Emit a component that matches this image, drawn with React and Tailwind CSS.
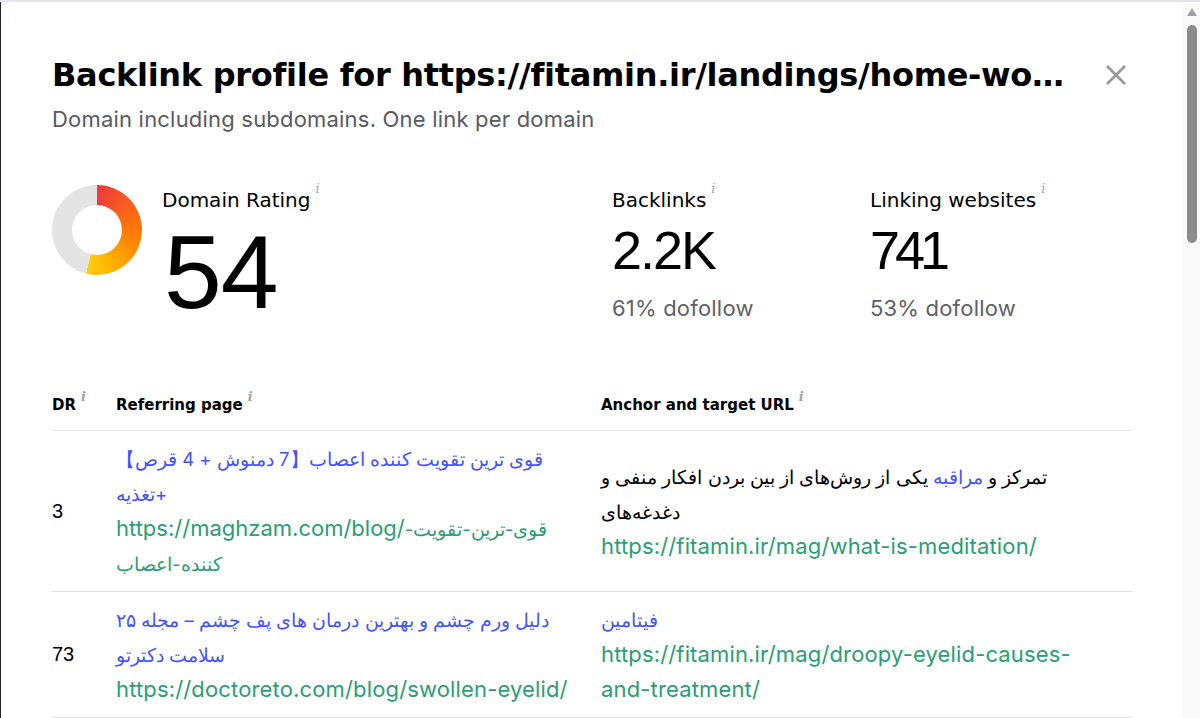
import React from "react";

const I = () => (
  <span className="ml-[5px] relative -top-[4px] text-[13px] italic text-[#a3a3a3] font-['DejaVu_Serif',serif] leading-none">i</span>
);

const FA = ({ children }) => <span className="text-[18.5px] leading-[20px]">{children}</span>;

export default function App() {
  return (
    <div className="w-[1200px] h-[718px] overflow-hidden bg-white flex flex-col font-['Inter',sans-serif]">
      <div className="h-[2px] bg-[#e8e4ee] shrink-0" />
      <div className="flex flex-1 min-h-0">
        <div className="w-[1px] bg-[#1f2535] shrink-0" />
        <div className="flex-1 min-w-0 px-[51px] pt-[53px]">
          {/* Title */}
          <div className="flex items-center">
            <h1 className="flex-1 min-w-0 truncate text-[32px] leading-[40px] font-bold text-black font-['DejaVu_Sans',sans-serif] tracking-[-0.3px]">
              Backlink profile for https://fitamin.ir/landings/home-workout-plans/
            </h1>
            <button className="ml-[30px] mr-[4px] w-[24px] h-[24px] flex items-center justify-center text-[#9a9a9a]">
              <svg width="24" height="24" viewBox="0 0 24 24" fill="none" stroke="currentColor" strokeWidth="2.8" strokeLinecap="butt">
                <path d="M3 3L21 21M21 3L3 21" />
              </svg>
            </button>
          </div>
          <p className="mt-[10px] text-[22px] leading-[28px] text-[#5a5a63] tracking-[0.2px]">
            Domain including subdomains. One link per domain
          </p>

          {/* Stats */}
          <div className="mt-[52px] flex">
            <div className="w-[560px] flex">
              <div className="w-[90px] h-[90px] rounded-full bg-[conic-gradient(#ee3a3a_0deg,#fa5a20_45deg,#ff7f00_100deg,#ffb400_160deg,#ffcc10_194deg,#e4e4e4_194deg,#e4e4e4_360deg)] flex items-center justify-center shrink-0">
                <div className="w-[50px] h-[50px] rounded-full bg-white" />
              </div>
              <div className="ml-[20px] mt-[1px]">
                <div className="text-[20px] leading-[28px] text-black flex items-start font-['DejaVu_Sans',sans-serif]">Domain Rating<I /></div>
                <div className="mt-[6px] ml-[2px] text-[104px] leading-none text-black font-['Liberation_Sans',sans-serif] tracking-[-1px]">54</div>
              </div>
            </div>
            <div className="w-[258px] mt-[1px]">
              <div className="text-[20px] leading-[28px] text-black flex items-start font-['DejaVu_Sans',sans-serif]">Backlinks<I /></div>
              <div className="mt-[9px] text-[54px] leading-none text-black font-['Liberation_Sans',sans-serif] tracking-[-2px]">2.2K</div>
              <div className="mt-[17px] text-[22px] leading-[28px] text-[#5f5f69] tracking-[0.2px]">61% dofollow</div>
            </div>
            <div className="mt-[1px]">
              <div className="text-[20px] leading-[28px] text-black flex items-start font-['DejaVu_Sans',sans-serif]">Linking websites<I /></div>
              <div className="mt-[9px] text-[54px] leading-none text-black font-['Liberation_Sans',sans-serif] tracking-[-5px]">741</div>
              <div className="mt-[17px] text-[22px] leading-[28px] text-[#5f5f69] tracking-[0.2px]">53% dofollow</div>
            </div>
          </div>

          {/* Table */}
          <div className="mt-[57px]">
            <div className="flex h-[50px] items-center border-b border-[#e3e3e3] text-[15px] font-bold text-black font-['DejaVu_Sans',sans-serif]">
              <div className="w-[64px] flex items-start">DR<I /></div>
              <div className="w-[485px] flex items-start">Referring page<I /></div>
              <div className="flex-1 flex items-start">Anchor and target URL<I /></div>
            </div>

            <div className="flex border-b border-[#e3e3e3] py-[10px] text-[22px] leading-[35px]">
              <div className="w-[64px] flex items-center text-black text-[20px] font-['Liberation_Sans',sans-serif]">3</div>
              <div className="w-[485px] pr-[24px]">
                <div className="text-[#4353ff]"><FA>قوی ترین تقویت کننده اعصاب【7 دمنوش + 4 قرص】+تغذیه</FA></div>
                <div className="text-[#2a9e76]">https://maghzam.com/blog/<FA>قوی-ترین-تقویت-کننده-اعصاب</FA></div>
              </div>
              <div className="flex-1 pr-[24px] flex flex-col justify-center">
                <div className="text-black">
                  <FA>تمرکز و <span className="text-[#4353ff]">مراقبه</span> یکی از روش‌های از بین بردن افکار منفی و دغدغه‌های</FA>
                </div>
                <div className="text-[#2a9e76] tracking-[0.15px]">https://fitamin.ir/mag/what-is-meditation/</div>
              </div>
            </div>

            <div className="flex border-b border-[#e3e3e3] py-[10px] text-[22px] leading-[35px]">
              <div className="w-[64px] flex items-center text-black text-[20px] font-['Liberation_Sans',sans-serif]">73</div>
              <div className="w-[485px] pr-[24px]">
                <div className="text-[#4353ff]"><FA>دلیل ورم چشم و بهترین درمان های پف چشم – مجله ۲۵ سلامت دکترتو</FA></div>
                <div className="text-[#2a9e76] tracking-[0.15px]">https://doctoreto.com/blog/swollen-eyelid/</div>
              </div>
              <div className="flex-1 pr-[24px] flex flex-col justify-center">
                <div className="text-[#4353ff]"><FA>فیتامین</FA></div>
                <div className="text-[#2a9e76] tracking-[0.15px]">https://fitamin.ir/mag/droopy-eyelid-causes-and-treatment/</div>
              </div>
            </div>
          </div>
        </div>
        {/* Scrollbar */}
        <div className="w-[17px] shrink-0 bg-[#fafafa] flex flex-col items-center pt-[6px]">
          <div className="w-0 h-0 border-l-[5px] border-r-[5px] border-b-[8px] border-l-transparent border-r-transparent border-b-[#a3a3a3]" />
          <div className="mt-[9px] w-[10px] h-[218px] rounded-full bg-[#8c8c8c]" />
        </div>
      </div>
    </div>
  );
}
